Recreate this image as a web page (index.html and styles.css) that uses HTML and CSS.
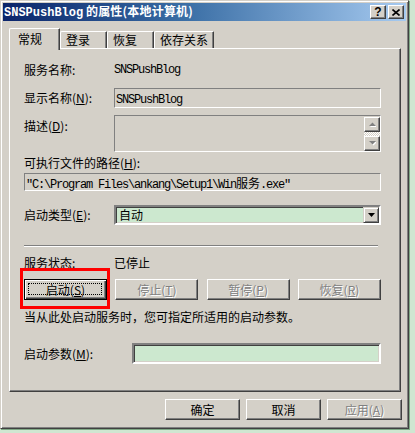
FILE: index.html
```html
<!DOCTYPE html>
<html lang="zh-CN">
<head>
<meta charset="utf-8">
<title>SNSPushBlog 的属性(本地计算机)</title>
<link rel="stylesheet" href="styles.css">
</head>
<body>
<div class="window">
  <div class="titlebar">
    <span class="title"><span class="title-lat">SNSPushBlog</span> <span class="title-cjk">的属性(本地计算机)</span></span>
    <div class="tbtns">
      <span class="tbtn help">?</span>
      <span class="tbtn"><svg width="8" height="7" viewBox="0 0 8 7"><path d="M0.5 0.5 L7.5 6.5 M7.5 0.5 L0.5 6.5" stroke="#000" stroke-width="1.6"/></svg></span>
    </div>
  </div>

  <div class="tabs">
    <div class="tab active w1">常规</div>
    <div class="tab w2">登录</div>
    <div class="tab w2">恢复</div>
    <div class="tab w3">依存关系</div>
  </div>

  <div class="panel">
    <div class="row r-name">
      <span class="lbl">服务名称:</span>
      <span class="lat">SNSPushBlog</span>
    </div>
    <div class="row r-disp">
      <span class="lbl">显示名称(<u>N</u>):</span>
      <div class="field ro h20"><span class="lat">SNSPushBlog</span></div>
    </div>
    <div class="row r-desc top">
      <span class="lbl lbl-desc">描述(<u>D</u>):</span>
      <div class="field ro desc">
        <div class="sb">
          <span class="sbtn"><svg width="7" height="5" viewBox="0 0 7 5"><path d="M4.5 1.5 L8 5 L1 5 Z" fill="#fff"/><path d="M3.5 0.5 L7 4 L0 4 Z" fill="#808080"/></svg></span>
          <span class="checker"></span>
          <span class="sbtn"><svg width="7" height="5" viewBox="0 0 7 5"><path d="M1 1 L8 1 L4.5 4.5 Z" fill="#fff"/><path d="M0 0 L7 0 L3.5 3.5 Z" fill="#808080"/></svg></span>
        </div>
      </div>
    </div>
    <div class="row r-pathlbl">
      <span>可执行文件的路径(<u>H</u>):</span>
    </div>
    <div class="field ro path"><span class="lat">"C:\Program Files\ankang\Setup1\Win<span class="cjk">服务</span>.exe"</span></div>
    <div class="row r-type">
      <span class="lbl">启动类型(<u>E</u>):</span>
      <div class="field green combo">
        <span class="combo-text">自动</span>
        <span class="ddbtn"><svg width="7" height="4" viewBox="0 0 7 4"><path d="M0 0 L7 0 L3.5 4 Z" fill="#000"/></svg></span>
      </div>
    </div>
    <div class="sep"></div>
    <div class="row r-status">
      <span class="lbl">服务状态:</span>
      <span>已停止</span>
    </div>
    <div class="btnrow">
      <span class="btn focus">启动(<u>S</u>)</span>
      <span class="btn disabled">停止(<u>T</u>)</span>
      <span class="btn disabled">暂停(<u>P</u>)</span>
      <span class="btn disabled">恢复(<u>R</u>)</span>
    </div>
    <div class="row r-hint">当从此处启动服务时，您可指定所适用的启动参数。</div>
    <div class="row r-param">
      <span class="lbl lbl-param">启动参数(<u>M</u>):</span>
      <div class="field green param"></div>
    </div>
  </div>

  <div class="footer">
    <span class="btn fbtn">确定</span>
    <span class="btn fbtn">取消</span>
    <span class="btn fbtn disabled">应用(<u>A</u>)</span>
  </div>

  <div class="redbox"></div>
</div>
</body>
</html>
```

FILE: styles.css
```css
* { box-sizing: border-box; }
html, body { margin: 0; padding: 0; }
body {
  width: 415px;
  height: 433px;
  overflow: hidden;
  background: #cfe6d1;
  font-family: "Noto Sans CJK SC", sans-serif;
  font-size: 12px;
  line-height: 16px;
  color: #000;
}
u { text-decoration: underline; text-underline-offset: 1px; }

.window {
  position: relative;
  width: 409px;
  height: 429px;
  background: #d4d0c8;
  border: 1px solid;
  border-color: #d4d0c8 #404040 #404040 #d4d0c8;
  padding: 2px;
  box-shadow: inset 1px 1px #fff, inset -1px -1px #808080, 1px 1px 0 #7fa885;
  display: flex;
  flex-direction: column;
}

.titlebar {
  height: 18px;
  flex: none;
  display: flex;
  align-items: center;
  justify-content: space-between;
  padding: 0 2px 0 1px;
  background: linear-gradient(to right, #0a246a 0%, #3a6ea5 45%, #a6caf0 100%);
  color: #fff;
  font-weight: bold;
}
.title { white-space: nowrap; font-size: 12px; }
.title-lat { font-family: "Liberation Mono", monospace; font-weight: bold; font-size: 12px; }
.title-cjk { letter-spacing: 0.2px; }
.tbtns { display: flex; gap: 2px; }
.tbtn {
  width: 16px;
  height: 14px;
  background: #d4d0c8;
  border: 1px solid;
  border-color: #fff #404040 #404040 #fff;
  box-shadow: inset -1px -1px #808080;
  display: flex;
  align-items: center;
  justify-content: center;
  color: #000;
  font-family: "Liberation Sans", sans-serif;
  font-weight: bold;
  font-size: 12px;
  line-height: 12px;
}

.tabs {
  flex: none;
  margin-top: 7px;
  height: 20px;
  padding-left: 6px;
  display: flex;
  align-items: flex-end;
  position: relative;
  z-index: 1;
}
.tab {
  height: 17px;
  border-top: 1px solid #fff;
  border-left: 1px solid #fff;
  border-right: 1px solid #404040;
  box-shadow: inset -1px 0 #808080;
  border-top-left-radius: 2px;
  border-top-right-radius: 1px;
  padding-left: 5px;
  line-height: 15px;
  background: #d4d0c8;
  white-space: nowrap;
}
.tab.active {
  height: 22px;
  margin-bottom: -2px;
  padding-left: 8px;
  line-height: 19px;
}
.w1 { width: 51px; }
.w2 { width: 47px; }
.w3 { width: 60px; }

.panel {
  flex: none;
  margin-left: 6px;
  width: 392px;
  height: 344px;
  border: 1px solid;
  border-color: #fff #404040 #404040 #fff;
  box-shadow: inset -1px -1px #808080;
  padding: 0 19px 0 14px;
  display: flex;
  flex-direction: column;
}

.row { display: flex; align-items: center; white-space: nowrap; }
.row.top { align-items: flex-start; }
.lbl { width: 90px; flex: none; }
.lat {
  font-family: "Liberation Mono", monospace;
  font-size: 12px;
  letter-spacing: -1.2px;
  white-space: pre;
}
.cjk { font-family: "Noto Sans CJK SC", sans-serif; letter-spacing: 0; }

.field { border: 1px solid; }
.field.ro {
  border-color: #808080 #fff #fff #808080;
  background: #d4d0c8;
  padding: 1px 0 0 1px;
}
.field.green {
  border-width: 2px;
  border-style: solid;
  border-color: #808080 #fff #fff #808080;
  box-shadow: inset 1px 1px #404040, inset -1px -1px #d4d0c8;
  background: #cce8cf;
}

.r-name { margin-top: 13px; height: 16px; }
.r-disp { margin-top: 10px; }
.h20 { width: 267px; height: 20px; }
.r-desc { margin-top: 7px; }
.lbl-desc { margin-top: 3px; }
.desc {
  width: 267px;
  height: 37px;
  display: flex;
  justify-content: flex-end;
  padding: 0;
}
.sb {
  width: 16px;
  display: flex;
  flex-direction: column;
}
.sbtn {
  width: 16px;
  height: 15px;
  flex: none;
  background: #d4d0c8;
  border: 1px solid;
  border-color: #fff #404040 #404040 #fff;
  box-shadow: inset -1px -1px #808080;
  display: flex;
  align-items: center;
  justify-content: center;
}
.checker {
  flex: 1;
  background: repeating-conic-gradient(#fff 0 25%, #d4d0c8 0 50%) 0 0 / 2px 2px;
}
.r-pathlbl { margin-top: 3px; height: 16px; }
.path { margin-top: 2px; width: 357px; height: 18px; padding: 0 0 0 1px; line-height: 16px; }
.r-type { margin-top: 14px; }
.combo {
  width: 267px;
  height: 20px;
  display: flex;
  align-items: center;
  justify-content: space-between;
  padding-left: 3px;
}
.combo-text { line-height: 16px; }
.ddbtn {
  width: 16px;
  height: 16px;
  background: #d4d0c8;
  border: 1px solid;
  border-color: #d4d0c8 #404040 #404040 #d4d0c8;
  box-shadow: inset 1px 1px #fff, inset -1px -1px #808080;
  display: flex;
  align-items: center;
  justify-content: center;
}

.sep {
  margin-top: 20px;
  width: 354px;
  height: 2px;
  border-top: 1px solid #808080;
  border-bottom: 1px solid #fff;
  flex: none;
}
.r-status { margin-top: 8px; height: 16px; }

.btnrow {
  margin-top: 8px;
  width: 357px;
  display: flex;
  justify-content: space-between;
}
.btn {
  position: relative;
  width: 83px;
  height: 21px;
  background: #d4d0c8;
  border: 1px solid;
  border-color: #fff #404040 #404040 #fff;
  box-shadow: inset -1px -1px #808080;
  display: flex;
  align-items: center;
  justify-content: center;
  white-space: nowrap;
}
.btn.focus {
  border-color: #000;
  box-shadow: inset 1px 1px #fff, inset -1px -1px #404040, inset -2px -2px #808080;
}
.btn.focus::after {
  content: "";
  position: absolute;
  left: 3px;
  top: 3px;
  right: 4px;
  bottom: 4px;
  border: 1px dotted #000;
}
.btn.disabled { color: #808080; text-shadow: 1px 1px 0 #fff; }

.r-hint { margin-top: 9px; height: 16px; }
.r-param { margin-top: 18px; }
.lbl-param { width: 108px; }
.param { width: 249px; height: 21px; }

.footer {
  flex: none;
  margin-top: 7px;
  display: flex;
  justify-content: flex-end;
  gap: 6px;
  padding-right: 4px;
}
.fbtn { width: 75px; }

.redbox {
  position: absolute;
  left: 19px;
  top: 267px;
  width: 90px;
  height: 41px;
  border: 3px solid #ff0000;
}
```
